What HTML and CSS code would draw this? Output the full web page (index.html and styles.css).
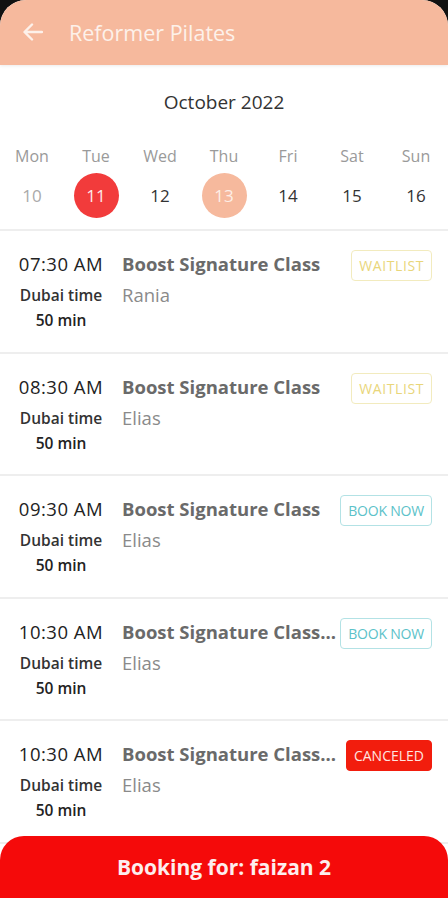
FILE: index.html
```html
<!DOCTYPE html>
<html lang="en">
<head>
    <meta charset="UTF-8">
    <meta name="viewport" content="width=device-width, initial-scale=1.0">
    <title>Reformer Pilates</title>
    <link rel="stylesheet" href="styles.css">
</head>
<body>
    <div class="screen">
        <div class="header">
            <svg class="back" width="20" height="18" viewBox="0 0 20 18">
                <path d="M19 9H2M9 1.5L1.5 9 9 16.5" fill="none" stroke="#fdf1ea" stroke-width="2.4" stroke-linecap="round" stroke-linejoin="round"/>
            </svg>
            <h1>Reformer Pilates</h1>
        </div>

        <!-- Calendar -->
        <div class="calendar">
            <div class="month">October 2022</div>
            <div class="week">
                <div class="day"><span class="wd">Mon</span><span class="num past">10</span></div>
                <div class="day"><span class="wd">Tue</span><span class="num today">11</span></div>
                <div class="day"><span class="wd">Wed</span><span class="num">12</span></div>
                <div class="day"><span class="wd">Thu</span><span class="num selected">13</span></div>
                <div class="day"><span class="wd">Fri</span><span class="num">14</span></div>
                <div class="day"><span class="wd">Sat</span><span class="num">15</span></div>
                <div class="day"><span class="wd">Sun</span><span class="num">16</span></div>
            </div>
        </div>

        <!-- Classes -->
        <div class="list">
            <div class="row">
                <div class="time">
                    <div class="clock">07:30 AM</div>
                    <div class="zone">Dubai time</div>
                    <div class="dur">50 min</div>
                </div>
                <div class="info">
                    <div class="name">Boost Signature Class</div>
                    <div class="coach">Rania</div>
                </div>
                <span class="badge waitlist">WAITLIST</span>
            </div>
            <div class="row">
                <div class="time">
                    <div class="clock">08:30 AM</div>
                    <div class="zone">Dubai time</div>
                    <div class="dur">50 min</div>
                </div>
                <div class="info">
                    <div class="name">Boost Signature Class</div>
                    <div class="coach">Elias</div>
                </div>
                <span class="badge waitlist">WAITLIST</span>
            </div>
            <div class="row">
                <div class="time">
                    <div class="clock">09:30 AM</div>
                    <div class="zone">Dubai time</div>
                    <div class="dur">50 min</div>
                </div>
                <div class="info">
                    <div class="name">Boost Signature Class</div>
                    <div class="coach">Elias</div>
                </div>
                <span class="badge book">BOOK NOW</span>
            </div>
            <div class="row">
                <div class="time">
                    <div class="clock">10:30 AM</div>
                    <div class="zone">Dubai time</div>
                    <div class="dur">50 min</div>
                </div>
                <div class="info">
                    <div class="name">Boost Signature Class...</div>
                    <div class="coach">Elias</div>
                </div>
                <span class="badge book">BOOK NOW</span>
            </div>
            <div class="row">
                <div class="time">
                    <div class="clock">10:30 AM</div>
                    <div class="zone">Dubai time</div>
                    <div class="dur">50 min</div>
                </div>
                <div class="info">
                    <div class="name">Boost Signature Class...</div>
                    <div class="coach">Elias</div>
                </div>
                <span class="badge canceled">CANCELED</span>
            </div>
        </div>

        <button class="booking">Booking for: faizan 2</button>
    </div>
</body>
</html>
```

FILE: styles.css
```css
* {
    margin: 0;
    padding: 0;
    box-sizing: border-box;
}

body {
    font-family: "Open Sans", Lato, sans-serif;
    background: #111;
    width: 448px;
    height: 900px;
    overflow: hidden;
}

.screen {
    position: relative;
    height: 900px;
    background: #fff;
    border-radius: 26px 26px 0 0;
    overflow: hidden;
}

.header {
    height: 65px;
    background: #f6b99d;
    display: flex;
    align-items: center;
    padding-left: 23px;
    gap: 26px;
    box-shadow: 0 1px 3px rgba(0, 0, 0, 0.08);
}

.back {
    margin-top: -2px;
}

.header h1 {
    font-size: 21.5px;
    font-weight: 500;
    color: #fdf1ea;
    margin-top: -1px;
}

.calendar {
    padding-top: 23px;
    border-bottom: 2px solid #eeeeee;
    height: 166px;
}

.month {
    text-align: center;
    font-size: 19px;
    color: #333;
    line-height: 28px;
}

.week {
    display: grid;
    grid-template-columns: repeat(7, 1fr);
    margin-top: 29px;
}

.day {
    display: flex;
    flex-direction: column;
    align-items: center;
}

.wd {
    font-size: 16px;
    color: #9a9a9a;
    height: 22px;
    line-height: 22px;
}

.num {
    width: 45px;
    height: 45px;
    border-radius: 50%;
    display: flex;
    align-items: center;
    justify-content: center;
    font-size: 17px;
    color: #333;
    margin-top: 6px;
}

.num.past {
    color: #aaa;
}

.num.today {
    background: #f23b3b;
    color: #fde8e8;
}

.num.selected {
    background: #f6b99d;
    color: #fdeee6;
}

.row {
    height: 122.5px;
    border-bottom: 2px solid #eeeeee;
    display: flex;
    align-items: flex-start;
    padding: 20px 16px 0 12px;
}

.time {
    width: 98px;
    text-align: center;
    flex-shrink: 0;
}

.clock {
    font-size: 18.5px;
    color: #222;
    line-height: 26px;
    letter-spacing: 0.5px;
}

.zone {
    font-size: 15.5px;
    font-weight: 600;
    color: #333;
    margin-top: 7px;
    line-height: 22px;
}

.dur {
    font-size: 15.5px;
    font-weight: 600;
    color: #222;
    line-height: 28px;
}

.info {
    flex: 1;
    min-width: 0;
    padding-left: 12px;
    padding-right: 4px;
}

.name {
    font-size: 18.5px;
    font-weight: 700;
    color: #6a6a6a;
    line-height: 26px;
    white-space: nowrap;
    overflow: hidden;
}

.coach {
    font-size: 18.5px;
    color: #8a8a8a;
    margin-top: 6px;
    line-height: 24px;
}

.badge {
    flex-shrink: 0;
    font-size: 14px;
    padding: 0 7px;
    height: 31px;
    line-height: 29px;
    border-radius: 4px;
    border: 1.5px solid;
    margin-top: -1px;
}

.badge.waitlist {
    color: #e9d67a;
    border-color: #f2ebbe;
    letter-spacing: 0.6px;
}

.badge.book {
    color: #5cc2c9;
    border-color: #b3e2e5;
    letter-spacing: -0.2px;
}

.badge.canceled {
    background: #f21d0d;
    border-color: #f21d0d;
    color: #ffe6e0;
}

.booking {
    position: absolute;
    left: 0;
    right: 0;
    bottom: 2px;
    height: 62px;
    background: #f50a0a;
    border: none;
    border-radius: 24px 24px 0 0;
    color: #fdeeee;
    font-family: "Open Sans", Lato, sans-serif;
    font-size: 21px;
    font-weight: 700;
}
```
